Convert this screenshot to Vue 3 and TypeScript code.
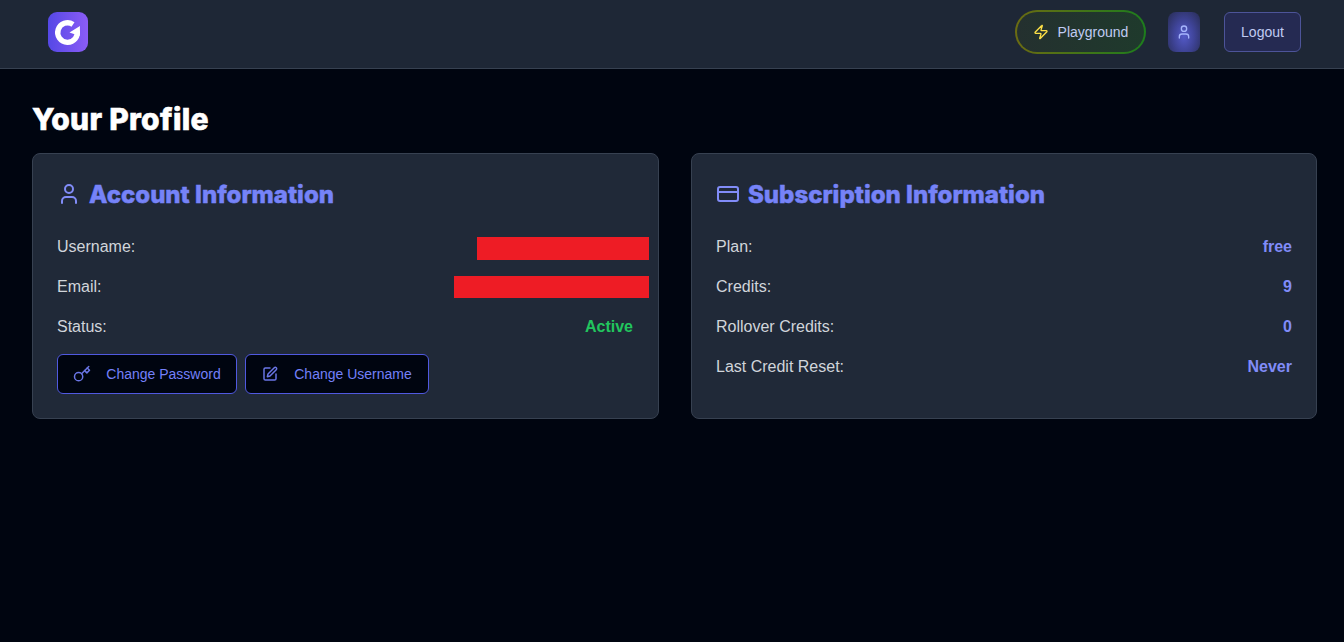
<script setup lang="ts">
interface Row { label: string; value: string; kind?: string }
const account: Row[] = [
  { label: 'Username:', value: '', kind: 'hidden-a' },
  { label: 'Email:', value: '', kind: 'hidden-b' },
  { label: 'Status:', value: 'Active', kind: 'active' },
]
const subscription: Row[] = [
  { label: 'Plan:', value: 'free' },
  { label: 'Credits:', value: '9' },
  { label: 'Rollover Credits:', value: '0' },
  { label: 'Last Credit Reset:', value: 'Never' },
]
</script>

<template>
  <div class="page">
    <header class="nav">
      <div class="logo">
        <svg viewBox="0 0 40 40" width="40" height="40">
          <path d="M25 12.4A9.8 9.8 0 1 0 29 18" fill="none" stroke="#fff" stroke-width="5.4" />
          <path d="M21.5 20.5 32 14 31.5 24z" fill="#fff" />
        </svg>
      </div>
      <div class="nav-actions">
        <button class="pill">
          <svg class="bolt" viewBox="0 0 24 24" width="16" height="16" fill="none" stroke="#fde047" stroke-width="2" stroke-linecap="round" stroke-linejoin="round"><path d="M4 14a1 1 0 0 1-.78-1.63l9.9-10.2a.5.5 0 0 1 .86.46l-1.92 6.02A1 1 0 0 0 13 10h7a1 1 0 0 1 .78 1.63l-9.9 10.2a.5.5 0 0 1-.86-.46l1.92-6.02A1 1 0 0 0 11 14z" /></svg>
          <span>Playground</span>
        </button>
        <div class="avatar">
          <svg viewBox="0 0 24 24" width="16" height="16" fill="none" stroke="#a5b4fc" stroke-width="2" stroke-linecap="round" stroke-linejoin="round"><path d="M19 21v-2a4 4 0 0 0-4-4H9a4 4 0 0 0-4 4v2" /><circle cx="12" cy="7" r="4" /></svg>
        </div>
        <button class="logout">Logout</button>
      </div>
    </header>

    <main class="main">
      <h1 class="title">Your Profile</h1>
      <div class="grid">
        <section class="card">
          <h2 class="card-title">
            <svg viewBox="0 0 24 24" width="24" height="24" fill="none" stroke="#818cf8" stroke-width="2" stroke-linecap="round" stroke-linejoin="round"><path d="M19 21v-2a4 4 0 0 0-4-4H9a4 4 0 0 0-4 4v2" /><circle cx="12" cy="7" r="4" /></svg>
            <span>Account Information</span>
          </h2>
          <div class="rows">
            <div v-for="r in account" :key="r.label" class="row">
              <span class="label">{{ r.label }}</span>
              <span v-if="r.kind === 'hidden-a'" class="redact redact-a"></span>
              <span v-else-if="r.kind === 'hidden-b'" class="redact redact-b"></span>
              <span v-else class="value active">{{ r.value }}</span>
            </div>
          </div>
          <div class="buttons">
            <button class="action pw">
              <svg viewBox="0 0 24 24" width="18" height="18" fill="none" stroke="#6a76e6" stroke-width="2" stroke-linecap="round" stroke-linejoin="round"><circle cx="7.5" cy="15.5" r="5.5" /><path d="m21 2-9.6 9.6" /><path d="m15.5 7.5 3 3L22 7l-3-3" /></svg>
              <span>Change Password</span>
            </button>
            <button class="action un">
              <svg viewBox="0 0 24 24" width="16" height="16" fill="none" stroke="#6a76e6" stroke-width="2.2" stroke-linecap="round" stroke-linejoin="round"><path d="M12 3H5a2 2 0 0 0-2 2v14a2 2 0 0 0 2 2h14a2 2 0 0 0 2-2v-7" /><path d="M18.4 2.6a2.1 2.1 0 1 1 3 3L12 15l-4 1 1-4z" /></svg>
              <span>Change Username</span>
            </button>
          </div>
        </section>

        <section class="card">
          <h2 class="card-title">
            <svg viewBox="0 0 24 24" width="24" height="24" fill="none" stroke="#818cf8" stroke-width="2" stroke-linecap="round" stroke-linejoin="round"><rect x="2" y="5" width="20" height="14" rx="2" /><line x1="2" y1="10" x2="22" y2="10" /></svg>
            <span>Subscription Information</span>
          </h2>
          <div class="rows">
            <div v-for="r in subscription" :key="r.label" class="row">
              <span class="label">{{ r.label }}</span>
              <span class="value">{{ r.value }}</span>
            </div>
          </div>
        </section>
      </div>
    </main>
  </div>
</template>

<style>
html, body { margin: 0; background: #000510; }
</style>

<style scoped>
.page {
  min-height: 642px;
  background: #000510;
  font-family: "Liberation Sans", Arial, sans-serif;
  color: #d1d5db;
}
.nav {
  height: 68px;
  box-sizing: border-box;
  margin-bottom: 1px;
  background: #1e2736;
  box-shadow: 0 1px 0 #374151;
  display: flex;
  align-items: center;
  justify-content: space-between;
  padding: 0 43px 4px 48px;
}
.logo {
  width: 40px;
  height: 40px;
  border-radius: 9px;
  background: linear-gradient(90deg, #5548e6, #8b5cf6);
  display: flex;
}
.nav-actions { display: flex; align-items: center; }
button { font-family: inherit; cursor: pointer; }
.pill {
  width: 131px;
  height: 44px;
  box-sizing: border-box;
  border: 2px solid transparent;
  border-radius: 22px;
  background:
    linear-gradient(90deg, #24302f, #1f3a2c) padding-box,
    linear-gradient(90deg, #6b6b12, #1d7d1d) border-box;
  color: #c0cbf2;
  font-size: 14px;
  display: flex;
  align-items: center;
  justify-content: center;
  gap: 9px;
  padding: 0;
}
.avatar {
  width: 32px;
  height: 40px;
  margin-left: 22px;
  border-radius: 8px;
  background: radial-gradient(ellipse at 50% 60%, #545ac8 0%, #3f4498 45%, #272c52 100%);
  display: flex;
  align-items: center;
  justify-content: center;
}
.logout {
  width: 77px;
  height: 40px;
  margin-left: 24px;
  box-sizing: border-box;
  border: 1px solid #4d5499;
  border-radius: 6px;
  background: #252a52;
  color: #c0cbf2;
  font-size: 14px;
  padding: 0;
}
.main { padding: 30px 27px 0 32px; }
.title {
  margin: 0 0 14px;
  font-family: Inter, "Liberation Sans", sans-serif;
  font-weight: 800;
  font-size: 30px;
  line-height: 40px;
  height: 40px;
  letter-spacing: 0.3px;
  color: #fff;
  -webkit-text-stroke: 0.6px #fff;
}
.grid { display: grid; grid-template-columns: 627px 626px; gap: 32px; }
.card {
  box-sizing: border-box;
  height: 266px;
  background: #202938;
  border: 1px solid #374151;
  border-radius: 8px;
  padding: 24px;
}
.card-title {
  margin: 0 0 17px;
  height: 32px;
  display: flex;
  align-items: center;
  gap: 8px;
  font-family: Inter, "Liberation Sans", sans-serif;
  font-weight: 800;
  font-size: 24px;
  letter-spacing: 0;
  color: #7683f8;
  -webkit-text-stroke: 0.5px #7683f8;
}
.rows { display: flex; flex-direction: column; }
.row {
  height: 40px;
  display: flex;
  align-items: center;
  justify-content: space-between;
  font-size: 16px;
}
.label { color: #d1d5db; }
.value { font-weight: 700; color: #818cf8; }
.active { color: #22c55e; margin-right: 1px; }
.redact { background: #ee1c25; margin-right: -15px; }
.redact-a { width: 172px; height: 23px; margin-top: 3px; }
.redact-b { width: 195px; height: 22px; }
.buttons { display: flex; gap: 8px; margin-top: 7px; }
.action {
  height: 40px;
  box-sizing: border-box;
  border: 1px solid #5059e0;
  border-radius: 6px;
  background: #000510;
  color: #7480fa;
  font-size: 14px;
  display: flex;
  align-items: center;
  padding: 0;
  justify-content: center;
  gap: 15px;
}
.pw { width: 180px; }
.un { width: 184px; gap: 16px; }
</style>
